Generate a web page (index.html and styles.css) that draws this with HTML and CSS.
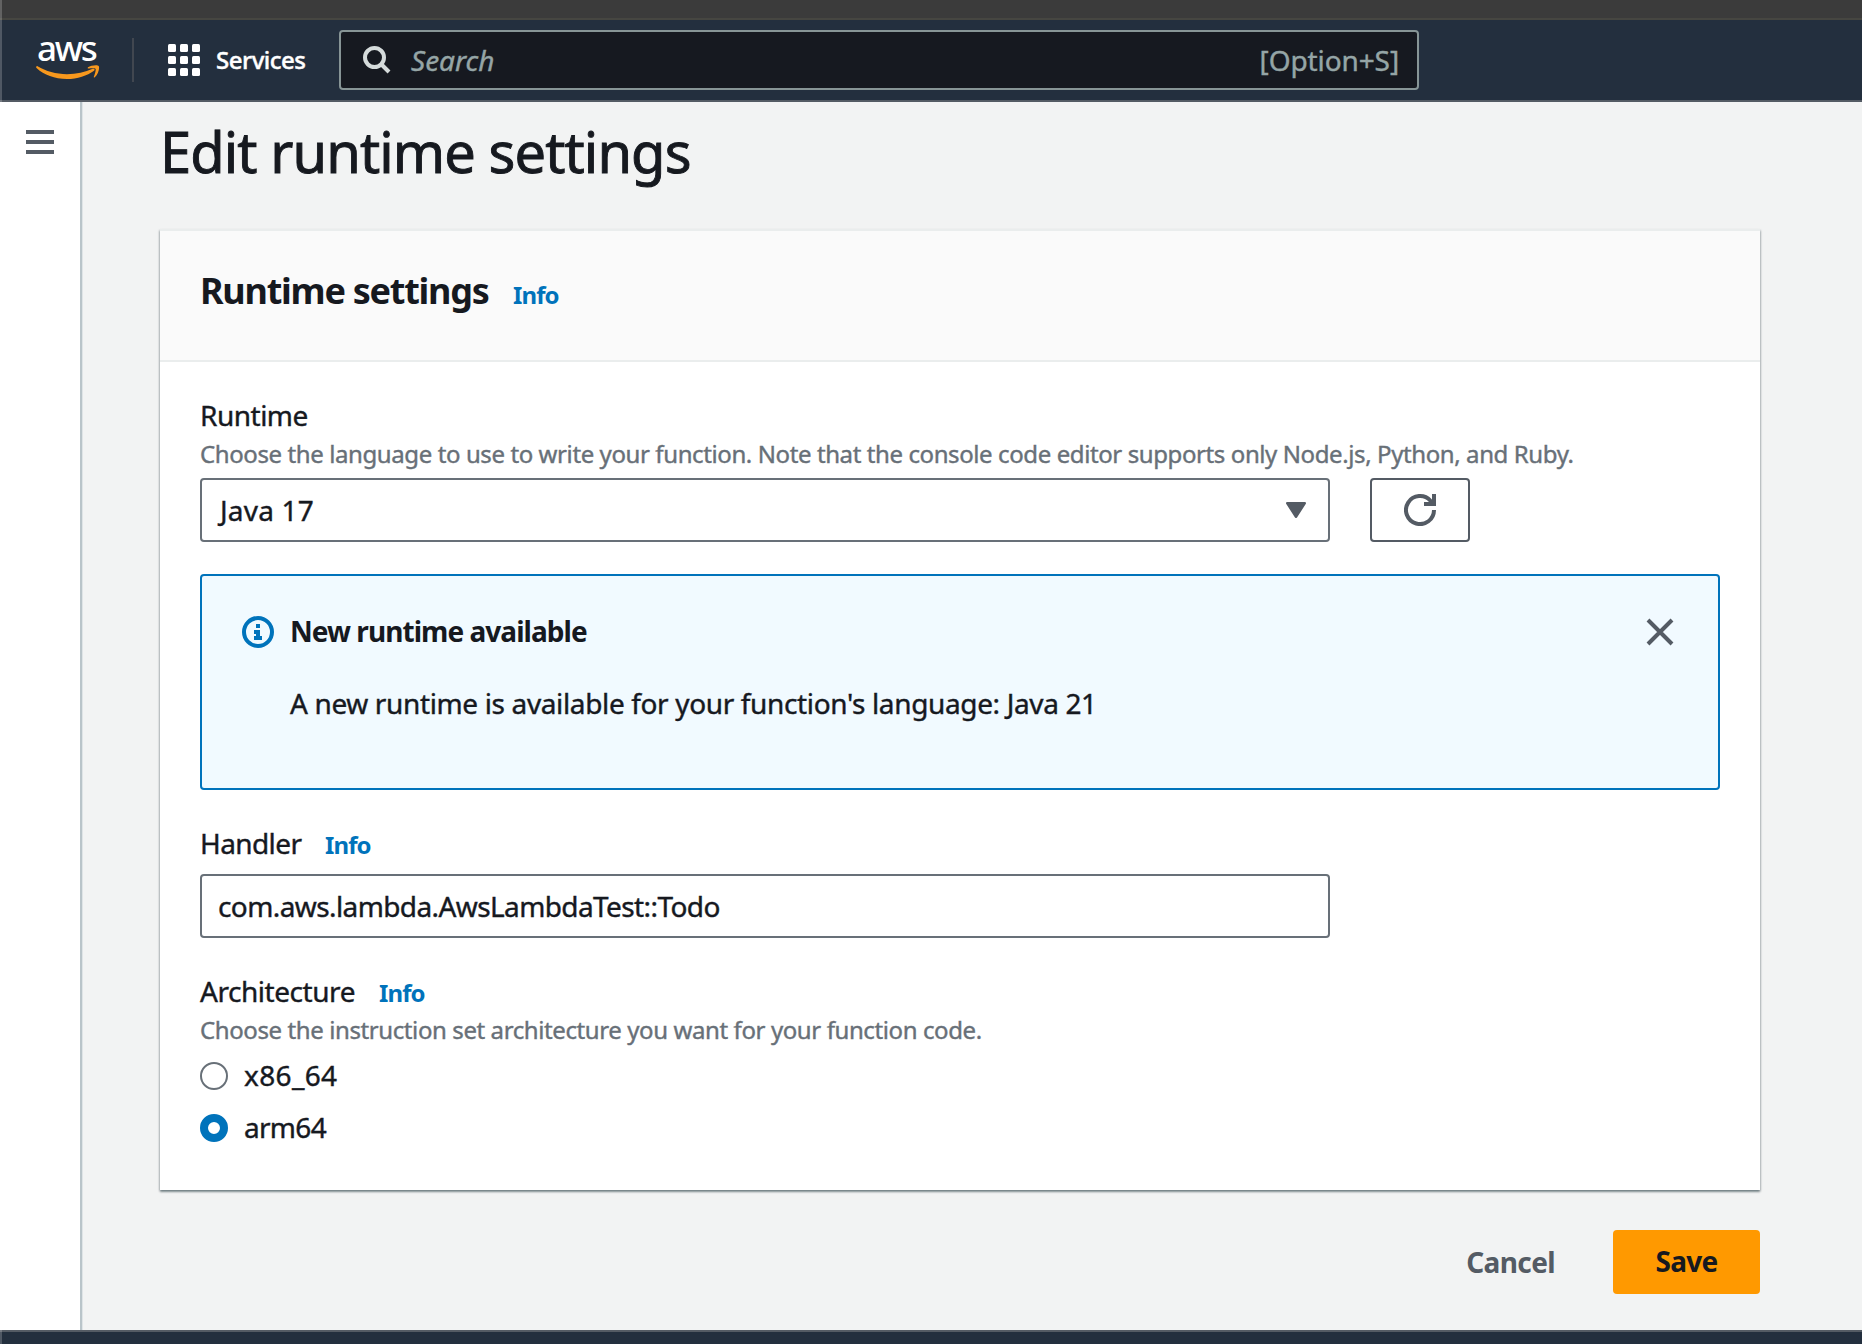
FILE: index.html
```html
<!DOCTYPE html>
<html lang="en">
<head>
<meta charset="utf-8">
<title>Edit runtime settings</title>
<link rel="stylesheet" href="styles.css">
</head>
<body>
<div class="window-bar"></div>
<header class="navbar">
  <div class="logo">
    <span class="logo-text">aws</span>
    <svg class="logo-smile" width="64" height="16" viewBox="0 0 64 16"><path d="M.6 1.2C-.2 2 .1 2.700.8 3.300 8 10 18.500 14 31 14c10.500 0 20-3.200 27-8.300 1.300-1 .3-2.500-1.300-1.900C49 7 40.500 9.200 31 9.200 20 9.200 9.800 6.200 1.600 1.300 1.200 1 .9 1 .6 1.200z" fill="#f7981d"/><path d="M52 2.300C54.500.5 61.500-.4 62.700 1c1.200 1.600-.4 8.300-3.900 11.200-.7.6-1.300.3-1-.5.9-2.100 2.500-6.800 1.700-7.900-.8-1-5.100-.6-7-.3-.8.1-1-.7-.5-1.200z" fill="#f7981d"/></svg>
  </div>
  <div class="nav-divider"></div>
  <div class="services">
    <svg width="32" height="32" viewBox="0 0 32 32" fill="#fff"><rect width="8" height="8" rx="1.500"/><rect x="12" width="8" height="8" rx="1.500"/><rect x="24" width="8" height="8" rx="1.500"/><rect y="12" width="8" height="8" rx="1.500"/><rect x="12" y="12" width="8" height="8" rx="1.500"/><rect x="24" y="12" width="8" height="8" rx="1.500"/><rect y="24" width="8" height="8" rx="1.500"/><rect x="12" y="24" width="8" height="8" rx="1.500"/><rect x="24" y="24" width="8" height="8" rx="1.500"/></svg>
    <span class="services-text">Services</span>
  </div>
  <div class="search">
    <svg width="28" height="28" viewBox="0 0 28 28" fill="none" stroke="#d5dbdb" stroke-width="4"><circle cx="11.500" cy="11.500" r="9.500"/><path d="M18 18l8 8"/></svg>
    <span class="search-text">Search</span>
    <span class="search-key">[Option+S]</span>
  </div>
</header>
<div class="layout">
  <aside class="sidebar">
    <svg width="28" height="24" viewBox="0 0 28 24" fill="#545b64"><path d="M0 0h28v4H0zM0 10h28v4H0zM0 20h28v4H0z"/></svg>
  </aside>
  <main class="content">
    <h1 class="title">Edit runtime settings</h1>
    <section class="card">
      <div class="card-head">
        <h2 class="card-title">Runtime settings</h2>
        <a class="info">Info</a>
      </div>
      <div class="card-body">
        <div class="label label-runtime">Runtime</div>
        <p class="hint">Choose the language to use to write your function. Note that the console code editor supports only Node.js, Python, and Ruby.</p>
        <div class="select-row">
          <div class="field select">
            <span class="select-value">Java 17</span>
            <svg width="20" height="16" viewBox="0 0 20 16" fill="#545b64"><path d="M1.500 0h17c1.300 0 1.900 1 1.200 2l-8.500 13.300c-.7 1-1.700 1-2.400 0L.3 2C-.4 1 .2 0 1.500 0z"/></svg>
          </div>
          <div class="refresh">
            <svg width="32" height="32" viewBox="0 0 32 32" fill="none" stroke="#545b64" stroke-width="4"><path d="M30 16A14 14 0 1 1 26.500 6.800L30 10.500M30 0v10H20"/></svg>
          </div>
        </div>
        <div class="alert">
          <svg class="alert-icon" width="32" height="32" viewBox="0 0 32 32" fill="#0073bb"><circle cx="16" cy="16" r="14" fill="none" stroke="#0073bb" stroke-width="4"/><path d="M14 8h4v4h-4zM12 14h6v6h2v4h-8v-4h2v-2h-2z"/></svg>
          <div class="alert-main">
            <div class="alert-title">New runtime available</div>
            <div class="alert-text">A new runtime is available for your function's language: Java 21</div>
          </div>
          <svg class="alert-close" width="28" height="28" viewBox="0 0 28 28" fill="none" stroke="#545b64" stroke-width="4"><path d="M2 2l24 24M26 2L2 26"/></svg>
        </div>
        <div class="label-row label-row-handler"><span class="label">Handler</span><a class="info">Info</a></div>
        <div class="field input"><span class="input-value">com.aws.lambda.AwsLambdaTest::Todo</span></div>
        <div class="label-row label-row-arch"><span class="label label-arch">Architecture</span><a class="info">Info</a></div>
        <p class="hint">Choose the instruction set architecture you want for your function code.</p>
        <div class="radios">
          <div class="radio"><span class="dot"></span><span class="radio-x86">x86_64</span></div>
          <div class="radio"><span class="dot dot-on"></span><span class="radio-arm">arm64</span></div>
        </div>
      </div>
    </section>
    <div class="actions">
      <span class="cancel">Cancel</span>
      <span class="save">Save</span>
    </div>
  </main>
</div>
<footer class="footer"></footer>
<div class="window-edge"></div>
</body>
</html>
```
FILE: styles.css
```css
* { box-sizing: border-box; }
body {
  margin: 0;
  width: 1862px;
  height: 1344px;
  overflow: hidden;
  display: flex;
  flex-direction: column;
  font-family: "Noto Sans", sans-serif;
  font-size: 28px;
  line-height: 40px;
  color: #16191f;
  background: #f2f3f3;
  -webkit-text-stroke: .4px currentColor;
}
svg { display: block; flex: none; }
h1, h2, p { margin: 0; }

.window-bar { height: 20px; flex: none; background: #3b3b3b; border-bottom: 2px solid #464641; }
.window-edge { position: absolute; left: 0; top: 0; width: 2px; height: 1344px; background: rgba(255, 255, 255, .2); }

.navbar {
  height: 82px;
  flex: none;
  display: flex;
  align-items: center;
  background: #232f3e;
  border-bottom: 2px solid #545b64;
}
.logo { width: 64px; height: 44px; margin-left: 36px; display: flex; flex-direction: column; }
.logo-text {
  height: 29px;
  padding-left: 1px;
  color: #fff;
  font-size: 35px;
  font-weight: 500;
  line-height: 20px;
  letter-spacing: -2.2px;
  -webkit-text-stroke: 0;
}
.logo-smile { margin-top: -2px; }
.nav-divider { width: 2px; height: 44px; margin: 0 34px 0 32px; background: #414750; }
.services { display: flex; align-items: center; width: 171px; gap: 16px; color: #fff; }
.services-text { font-size: 24px; font-weight: 500; letter-spacing: -.5px; padding-bottom: 1px; }
.search {
  width: 1080px;
  height: 60px;
  display: flex;
  align-items: center;
  padding: 0 18px 1px 22px;
  background: #161920;
  border: 2px solid #879596;
  border-radius: 4px;
  color: #95a5a6;
}
.search svg { margin-top: 1px; }
.search-text { margin-left: 20px; font-style: italic; }
.search-key { margin-left: auto; letter-spacing: -.1px; }

.layout { height: 1228px; flex: none; display: flex; }
.sidebar { width: 83px; padding: 28px 0 0 26px; background: #fff; border-right: 1px solid #dfe4e6; box-shadow: inset -2px 0 #b9c4c9; }
.content { width: 1677px; padding: 13px 0 0 77px; }

.title { font-size: 56px; font-weight: 400; line-height: 72px; letter-spacing: -.9px; -webkit-text-stroke-width: .9px; }
.card {
  height: 961px;
  margin-top: 42px;
  background: #fff;
  border-top: 2px solid #eaeded;
  box-shadow: 0 2px 2px 0 rgba(0, 28, 36, .4), 1px 1px 2px 0 rgba(0, 28, 36, .15), -1px 1px 2px 0 rgba(0, 28, 36, .15);
}
.card-head {
  height: 131px;
  display: flex;
  align-items: baseline;
  padding: 38px 40px 0;
  background: #fafafa;
  border-bottom: 2px solid #eaeded;
}
.card-title { width: 313px; font-size: 36px; line-height: 44px; letter-spacing: -1.25px; white-space: nowrap; -webkit-text-stroke: 0; }
.info { font-size: 24px; font-weight: 700; line-height: 36px; color: #0073bb; letter-spacing: -.9px; -webkit-text-stroke: 0; }
.card-body { padding: 33px 40px 0; }
.label-runtime { letter-spacing: -.5px; }
.hint { margin-top: 1px; font-size: 24px; line-height: 36px; letter-spacing: -.4px; color: #687078; white-space: nowrap; }

.select-row { display: flex; gap: 40px; margin-top: 6px; }
.field { width: 1130px; height: 64px; display: flex; align-items: center; padding: 0 22px 0 16px; border: 2px solid #687078; border-radius: 4px; }
.select { justify-content: space-between; }
.select-value { letter-spacing: .2px; padding: 0 0 1px 2px; }
.refresh { width: 100px; height: 64px; padding: 14px 32px; border: 2px solid #545b64; border-radius: 4px; }

.alert {
  height: 216px;
  margin-top: 32px;
  display: flex;
  padding: 35px 44px 0 40px;
  background: #f1faff;
  border: 2px solid #0073bb;
  border-radius: 4px;
}
.alert-icon { margin-top: 5px; }
.alert-main { flex: 1; margin-left: 16px; }
.alert-title { font-weight: 700; letter-spacing: -.95px; -webkit-text-stroke: 0; }
.alert-text { margin-top: 32px; letter-spacing: -.36px; }
.alert-close { margin-top: 7px; }

.label-row { display: flex; align-items: baseline; height: 40px; margin-top: 33px; }
.label-row .label { letter-spacing: -.6px; }
.label-row-handler .label { width: 125px; }
.label-row-arch .label { width: 179px; letter-spacing: -.45px; }
.input { margin-top: 11px; }
.input-value { letter-spacing: -.6px; }

.radios { display: flex; flex-direction: column; gap: 12px; margin-top: 7px; }
.radio { display: flex; align-items: center; gap: 16px; }
.radio-x86 { letter-spacing: .35px; }
.radio-arm { letter-spacing: -.7px; }
.dot { width: 28px; height: 28px; margin-top: 2px; border: 2px solid #687078; border-radius: 50%; background: #fff; }
.dot-on { border: 8px solid #0073bb; }

.actions { height: 64px; margin-top: 40px; display: flex; justify-content: flex-end; align-items: center; gap: 58px; font-weight: 700; -webkit-text-stroke: 0; }
.cancel { color: #545b64; letter-spacing: -.6px; }
.save { width: 147px; height: 64px; line-height: 63px; text-align: center; background: #f90; border-radius: 4px; letter-spacing: -.7px; }

.footer { height: 14px; flex: none; background: #232f3e; border-top: 2px solid #545b64; }
```
